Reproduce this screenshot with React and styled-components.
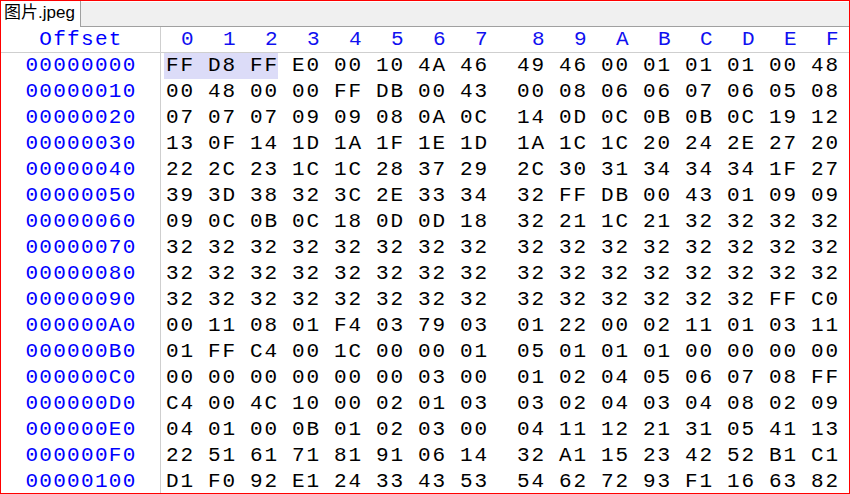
import React from "react";
import styled, { createGlobalStyle } from "styled-components";

const DATA = [
  "FF D8 FF E0 00 10 4A 46 49 46 00 01 01 01 00 48",
  "00 48 00 00 FF DB 00 43 00 08 06 06 07 06 05 08",
  "07 07 07 09 09 08 0A 0C 14 0D 0C 0B 0B 0C 19 12",
  "13 0F 14 1D 1A 1F 1E 1D 1A 1C 1C 20 24 2E 27 20",
  "22 2C 23 1C 1C 28 37 29 2C 30 31 34 34 34 1F 27",
  "39 3D 38 32 3C 2E 33 34 32 FF DB 00 43 01 09 09",
  "09 0C 0B 0C 18 0D 0D 18 32 21 1C 21 32 32 32 32",
  "32 32 32 32 32 32 32 32 32 32 32 32 32 32 32 32",
  "32 32 32 32 32 32 32 32 32 32 32 32 32 32 32 32",
  "32 32 32 32 32 32 32 32 32 32 32 32 32 32 FF C0",
  "00 11 08 01 F4 03 79 03 01 22 00 02 11 01 03 11",
  "01 FF C4 00 1C 00 00 01 05 01 01 01 00 00 00 00",
  "00 00 00 00 00 00 03 00 01 02 04 05 06 07 08 FF",
  "C4 00 4C 10 00 02 01 03 03 02 04 03 04 08 02 09",
  "04 01 00 0B 01 02 03 00 04 11 12 21 31 05 41 13",
  "22 51 61 71 81 91 06 14 32 A1 15 23 42 52 B1 C1",
  "D1 F0 92 E1 24 33 43 53 54 62 72 93 F1 16 63 82",
];

const COLS = "0123456789ABCDEF".split("");
// selected bytes: first three of the file
const SEL_START = 0;
const SEL_END = 2;

function App() {
  return (
    <>
      <GlobalStyle />
      <Window>
        <TabBar>
          <Tab>图片.jpeg</Tab>
          <TabFiller />
        </TabBar>
        <HeaderRow>
          <OffsetCell>Offset</OffsetCell>
          <Bytes>
            {COLS.map((c, i) => (
              <ColHead key={c} $split={i === 8}>
                {c}
              </ColHead>
            ))}
          </Bytes>
        </HeaderRow>
        {DATA.map((line, r) => {
          const offset = (r * 16).toString(16).toUpperCase().padStart(8, "0");
          return (
            <Row key={offset}>
              <OffsetCell>{offset}</OffsetCell>
              <Bytes>
                {line.split(" ").map((b, i) => {
                  const idx = r * 16 + i;
                  const sel = idx >= SEL_START && idx <= SEL_END;
                  return (
                    <Byte
                      key={i}
                      $split={i === 8}
                      $sel={sel}
                      $selEnd={idx === SEL_END}
                    >
                      {b}
                    </Byte>
                  );
                })}
              </Bytes>
            </Row>
          );
        })}
      </Window>
    </>
  );
}

export default App;

const GlobalStyle = createGlobalStyle`
  html, body {
    margin: 0;
    padding: 0;
    background: #fff;
  }
  * {
    box-sizing: border-box;
  }
`;

const Window = styled.div`
  width: 850px;
  height: 494px;
  border: 1px solid #ff0000;
  background: #fff;
  overflow: hidden;
  display: flex;
  flex-direction: column;
`;

const TabBar = styled.div`
  display: flex;
  height: 26px;
  flex-shrink: 0;
`;

const Tab = styled.div`
  width: 80px;
  background: #fff;
  border-right: 1px solid #a0a0a0;
  padding: 0 0 0 3px;
  font-family: "Liberation Sans", "Noto Sans CJK SC", sans-serif;
  font-size: 17px;
  line-height: 23px;
  color: #000;
  white-space: nowrap;
`;

const TabFiller = styled.div`
  flex: 1;
  margin-top: 1px;
  background: #f0f0f0;
  border-bottom: 1px solid #a0a0a0;
`;

const Row = styled.div`
  display: flex;
  height: 26px;
  flex-shrink: 0;
  align-items: stretch;
  font-family: "Liberation Mono", monospace;
  font-size: 21px;
  line-height: 26px;
`;

const HeaderRow = styled(Row)`
  height: 26px;
  border-bottom: 1px solid #cfcfcf;
  line-height: 25px;
`;

const OffsetCell = styled.div`
  width: 160px;
  flex-shrink: 0;
  border-right: 1px solid #cfcfcf;
  text-align: center;
  color: #0000ff;
  letter-spacing: 1.3px;
  padding-left: 1px;
`;

const Bytes = styled.div`
  display: flex;
  padding-left: 3px;
`;

const ColHead = styled.div`
  width: 42px;
  margin-left: ${(p) => (p.$split ? "15px" : "0")};
  padding-left: 17px;
  color: #1010f0;
`;

const Byte = styled.div`
  width: 42px;
  margin-left: ${(p) => (p.$split ? "15px" : "0")};
  padding-left: 2px;
  color: #000;
  letter-spacing: 1.8px;
  white-space: nowrap;
  background: ${(p) =>
    p.$sel
      ? p.$selEnd
        ? "linear-gradient(to right, #dcdcf8 30px, transparent 30px)"
        : "#dcdcf8"
      : "transparent"};
`;
